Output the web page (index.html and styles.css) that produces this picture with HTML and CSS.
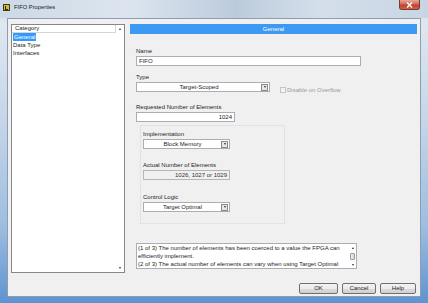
FILE: index.html
```html
<!DOCTYPE html>
<html>
<head>
<meta charset="utf-8">
<link rel="stylesheet" href="styles.css">
</head>
<body>
<div class="window">
  <div class="titlebar">
    <svg class="appicon" width="7" height="7" viewBox="0 0 7 7">
      <rect x="0" y="0" width="7" height="7" fill="#3b3a1e"/>
      <rect x="1" y="1" width="5" height="5" fill="#d8b830"/>
      <path d="M2 2h1v3h2v1H2z" fill="#2a2a10"/>
    </svg>
    <span class="title">FIFO Properties</span>
    <div class="close">
      <svg width="7" height="6" viewBox="0 0 7 6"><path d="M1 0.5L6 5.5M6 0.5L1 5.5" stroke="#fff" stroke-width="1.4"/></svg>
    </div>
  </div>
  <div class="client">
    <div class="main">
      <div class="catlist">
        <div class="catcol">
          <div class="cathead">Category</div>
          <div class="catitem"><span class="sel">General</span></div>
          <div class="catitem">Data Type</div>
          <div class="catitem">Interfaces</div>
        </div>
        <div class="catscroll">
          <span class="sbtn"><span class="tri-up"></span></span>
          <span class="sbtn"><span class="tri-down"></span></span>
        </div>
      </div>
      <div class="panel">
        <div class="panel-head">General</div>
        <div class="form">
          <div class="lbl first">Name</div>
          <div class="input w-name">FIFO</div>
          <div class="lbl gap7">Type</div>
          <div class="row">
            <div class="dropdown w-type"><span class="dd-text">Target-Scoped</span><span class="dd-btn"><span class="tri-down"></span></span></div>
            <div class="check"><span class="box"></span><span class="check-lbl">Disable on Overflow</span></div>
          </div>
          <div class="lbl gap9">Requested Number of Elements</div>
          <div class="input w-req right">1024</div>
          <div class="group">
            <div class="lbl">Implementation</div>
            <div class="dropdown w-grp"><span class="dd-text">Block Memory</span><span class="dd-btn"><span class="tri-down"></span></span></div>
            <div class="lbl gap12">Actual Number of Elements</div>
            <div class="input w-grp right disabled">1026, 1027 or 1029</div>
            <div class="lbl gap13">Control Logic</div>
            <div class="dropdown w-grp"><span class="dd-text">Target Optimal</span><span class="dd-btn"><span class="tri-down"></span></span></div>
          </div>
          <div class="msgbox">
            <div class="msgtext">(1 of 3) The number of elements has been coerced to a value the FPGA can efficiently implement.<br>(2 of 3) The actual number of elements can vary when using Target Optimal</div>
            <div class="msgscroll">
              <span class="mbtn"><span class="tri-up"></span></span>
              <span class="thumb"></span>
              <span class="mbtn"><span class="tri-down"></span></span>
            </div>
          </div>
        </div>
      </div>
    </div>
    <div class="buttons">
      <div class="btn b-ok">OK</div>
      <div class="btn b-cancel">Cancel</div>
      <div class="btn b-help">Help</div>
    </div>
  </div>
</div>
</body>
</html>
```
FILE: styles.css
```css
* { box-sizing: border-box; }
html, body { margin: 0; padding: 0; }
body {
  width: 428px; height: 303px; overflow: hidden;
  font-family: "Liberation Sans", Arial, sans-serif;
  font-size: 6px; color: #1e1e1e;
}
.window {
  width: 428px; height: 303px;
  background: linear-gradient(to bottom, #d2dde9 0%, #dfe7f0 8%, #c5d6e8 40%, #9dbde0 75%, #5d93d0 100%);
  display: flex; flex-direction: column;
}
.titlebar {
  height: 18px; display: flex; align-items: center; position: relative;
  background: linear-gradient(to right, #cdd9e6 0%, #dce5ef 30%, #bccbdc 55%, #d4dfeb 75%, #c8d5e3 100%);
}
.appicon { margin-left: 3px; margin-top: -4px; flex: none; }
.title { margin-left: 4px; margin-top: -4px; font-size: 5.8px; color: #1a1a1a; }
.close {
  position: absolute; left: 399px; top: 0; width: 21px; height: 10px;
  background: linear-gradient(to bottom, #e9a898 0%, #d46a57 45%, #c0402c 55%, #d0604a 100%);
  border: 1px solid #7a3a30; border-top: none; border-radius: 0 0 3px 3px;
  display: flex; align-items: center; justify-content: center;
}
.client {
  margin-left: 7px; width: 414px; height: 279px;
  background: #f0f0f0; border: 1px solid #8e9db0;
  padding: 5px 3px 0 3px;
  display: flex; flex-direction: column;
}
.main { display: flex; gap: 5px; }
.catlist {
  width: 114px; height: 249px; background: #fff;
  border: 1px solid #828790; display: flex;
}
.catcol { flex: 1; }
.cathead {
  height: 8px; line-height: 7px; padding-left: 3px;
  border-bottom: 1px solid #d5d5d5; border-right: 1px solid #d5d5d5;
}
.catitem { height: 8px; line-height: 8px; padding-left: 1px; }
.sel { background: #3399ff; color: #fff; padding: 0 1px; display: inline-block; height: 8px; }
.catscroll {
  width: 8px; display: flex; flex-direction: column; justify-content: space-between; align-items: center;
  padding: 0 0 1px 0;
}
.sbtn { width: 7px; height: 7px; display: flex; align-items: center; justify-content: center; }
.tri-up { width: 0; height: 0; border-left: 1.5px solid transparent; border-right: 1.5px solid transparent; border-bottom: 2px solid #333; }
.tri-down { width: 0; height: 0; border-left: 1.5px solid transparent; border-right: 1.5px solid transparent; border-top: 2px solid #333; }
.panel { width: 287px; }
.panel-head {
  height: 10px; line-height: 10px; background: #3c99f4; color: #fff; text-align: center;
}
.form { padding-left: 6px; }
.lbl { height: 8px; line-height: 8px; }
.first { margin-top: 13px; }
.gap7 { margin-top: 7px; }
.gap9 { margin-top: 9px; }
.gap12 { margin-top: 12px; }
.gap13 { margin-top: 13px; }
.input {
  margin-top: 1px; height: 10px; line-height: 8px; background: #fff;
  border: 1px solid #abadb3; padding: 0 2px;
}
.input.right { text-align: right; }
.input.disabled { background: #f0f0f0; border-color: #b5b5b5; color: #333; }
.w-name { width: 225px; }
.w-req { width: 99px; }
.w-type { width: 134px; }
.w-grp { width: 87px; }
.row { display: flex; align-items: flex-start; }
.dropdown {
  margin-top: 1px; height: 10px; background: #fff; border: 1px solid #abadb3;
  display: flex; align-items: center;
}
.dd-text { flex: 1; text-align: center; line-height: 8px; }
.dd-btn {
  width: 7px; height: 7px; margin-right: 1px; border: 1px solid #8a8a8a; background: #e6e6e6;
  display: flex; align-items: center; justify-content: center;
}
.check { display: flex; align-items: center; margin-left: 10px; margin-top: 5px; }
.box { width: 6px; height: 6px; border: 1px solid #c4c4c4; background: #f4f4f4; }
.check-lbl { margin-left: 1px; color: #9a9a9a; line-height: 8px; }
.group {
  margin-top: 3px; margin-left: 4px; width: 145px; height: 99px;
  border: 1px solid #e2e2e2; padding: 4px 0 0 2px;
}
.msgbox {
  margin-top: 19px; width: 221px; height: 26px; background: #fff;
  border: 1px solid #abadb3; display: flex;
}
.msgtext { flex: 1; line-height: 8px; padding: 0 1px; overflow: hidden; }
.msgscroll { width: 7px; display: flex; flex-direction: column; align-items: center; justify-content: space-between; padding: 1px 0; }
.mbtn { width: 5px; height: 5px; display: flex; align-items: center; justify-content: center; }
.thumb { width: 5px; height: 7px; border: 1px solid #999; border-radius: 1px; background: linear-gradient(to right, #eee, #d8d8d8); }
.buttons { display: flex; justify-content: flex-end; gap: 4px; margin-top: 10px; padding-right: 1px; }
.btn {
  height: 11px; line-height: 9px; text-align: center;
  border: 1px solid #707070; border-radius: 2px;
  background: linear-gradient(to bottom, #f3f3f3 0%, #ebebeb 50%, #dddddd 51%, #cfcfcf 100%);
}
.b-ok { width: 39px; }
.b-cancel { width: 34px; }
.b-help { width: 36px; }
```
